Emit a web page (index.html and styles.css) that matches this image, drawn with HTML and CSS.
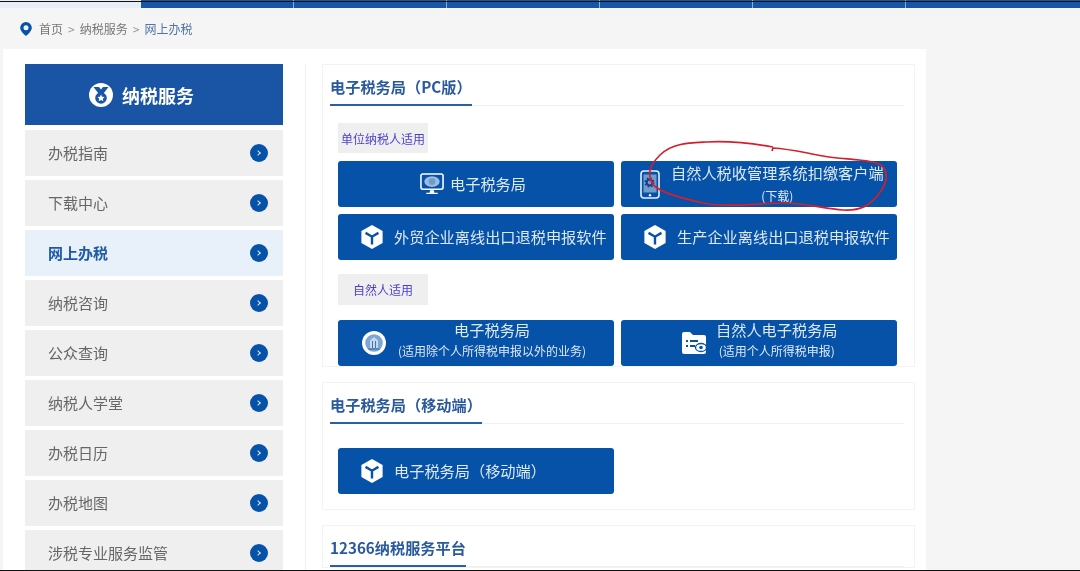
FILE: index.html
```html
<!DOCTYPE html>
<html lang="zh-CN">
<head>
    <meta charset="UTF-8">
    <title>网上办税</title>
    <link rel="stylesheet" href="styles.css">
</head>
<body>
    <div class="page">
      <div class="topnav">
        <div class="nav-home"></div>
        <div class="nav-item nav-first"></div>
        <div class="nav-item"></div>
        <div class="nav-item"></div>
        <div class="nav-item"></div>
        <div class="nav-item"></div>
        <div class="nav-rest"></div>
      </div>

      <div class="crumbs">
        <svg class="pin" viewBox="0 0 12 14"><path fill-rule="evenodd" d="M6 0a5.800 5.800 0 0 1 5.800 5.800C11.800 9 8 12.300 6 14 4 12.300.2 9 .2 5.800A5.800 5.800 0 0 1 6 0zm0 3.300a2.500 2.500 0 1 0 0 5 2.500 2.500 0 0 0 0-5z"/></svg>
        <span>首页</span><span class="sep">&gt;</span><span>纳税服务</span><span class="sep">&gt;</span><span class="current">网上办税</span>
      </div>

      <div class="panel">
        <div class="sidebar">
          <div class="side-head">
            <svg class="medal" viewBox="0 0 24 24">
              <circle cx="12" cy="12" r="12" fill="#fff"/>
              <path d="M4.500 4H10l2 2.500L14 4h5.500l-5 6.500h-5z" fill="#1a55a5"/>
              <circle cx="12" cy="15" r="5.800" fill="#1a55a5"/>
              <path d="m12 11.400 1.100 2.300 2.500.3-1.800 1.700.5 2.500-2.300-1.200-2.300 1.200.5-2.500L8.400 14l2.500-.3z" fill="#fff"/>
            </svg>
            <span>纳税服务</span>
          </div>
          <div class="side-item"><span>办税指南</span><i class="dot"></i></div>
          <div class="side-item"><span>下载中心</span><i class="dot"></i></div>
          <div class="side-item active"><span>网上办税</span><i class="dot"></i></div>
          <div class="side-item"><span>纳税咨询</span><i class="dot"></i></div>
          <div class="side-item"><span>公众查询</span><i class="dot"></i></div>
          <div class="side-item"><span>纳税人学堂</span><i class="dot"></i></div>
          <div class="side-item"><span>办税日历</span><i class="dot"></i></div>
          <div class="side-item"><span>办税地图</span><i class="dot"></i></div>
          <div class="side-item"><span>涉税专业服务监管</span><i class="dot"></i></div>
        </div>

        <div class="content">
          <div class="card">
            <div class="card-title"><h3>电子税务局（PC版）</h3></div>
            <div class="card-body">
              <div class="tag">单位纳税人适用</div>
              <div class="btn-grid">
                <a class="btn btn-monitor">
                  <svg class="icon" viewBox="0 0 25 23">
                    <rect x="1" y="1" width="23" height="16" rx="2" fill="#0552a8" stroke="#fff" stroke-width="1.600"/>
                    <ellipse cx="12.500" cy="9" rx="8" ry="5.500" fill="#9dbbdd"/>
                    <circle cx="12.500" cy="9" r="3.500" fill="#6f9ccb"/>
                    <path d="M10.500 18h4l.5 2.500h3.500V22H6.500v-1.500H10z" fill="#fff"/>
                  </svg>
                  <span>电子税务局</span>
                </a>
                <a class="btn btn-phone">
                  <svg class="icon-phone" viewBox="0 0 20 29">
                    <rect x="1" y="1" width="18" height="27" rx="3" fill="none" stroke="#e6eef7" stroke-width="1.600"/>
                    <rect x="3.500" y="4.500" width="13" height="18" fill="#6f9ccb"/>
                    <circle cx="9.500" cy="12.500" r="2.800" fill="none" stroke="#123e86" stroke-width="1.800"/>
                    <circle cx="9.500" cy="12.500" r="4.300" fill="none" stroke="#123e86" stroke-width="1.500" stroke-dasharray="1.700 1.700"/>
                    <circle cx="10" cy="25.200" r="1.200" fill="#fff"/>
                  </svg>
                  <div class="btn-lines">
                    <div>自然人税收管理系统扣缴客户端</div>
                    <small>(下载)</small>
                  </div>
                </a>
                <a class="btn btn-cube">
                  <svg class="icon" viewBox="0 0 24 26"><use href="#cube"/></svg>
                  <span>外贸企业离线出口退税申报软件</span>
                </a>
                <a class="btn btn-cube">
                  <svg class="icon" viewBox="0 0 24 26"><use href="#cube"/></svg>
                  <span>生产企业离线出口退税申报软件</span>
                </a>
              </div>
              <div class="tag tag-second">自然人适用</div>
              <div class="btn-grid">
                <a class="btn btn-round">
                  <svg class="icon" viewBox="0 0 24 24">
                    <circle cx="12" cy="12" r="12" fill="#fff"/>
                    <circle cx="12" cy="12" r="8.800" fill="#7fa6d2"/>
                    <path d="M8 17V9.500L12 6l4 3.500V17z" fill="#c5d8ec"/>
                    <path d="M10 10h1v7h-1zm3 0h1v7h-1z" fill="#3f77b6"/>
                    <path d="M6.500 17.500h11v1h-11z" fill="#2c66aa"/>
                  </svg>
                  <div class="btn-lines tight">
                    <div>电子税务局</div>
                    <small>(适用除个人所得税申报以外的业务)</small>
                  </div>
                </a>
                <a class="btn btn-folder">
                  <svg class="icon" viewBox="0 0 24 22">
                    <path d="M0 2a2 2 0 0 1 2-2h6l3 3h11a2 2 0 0 1 2 2v15a2 2 0 0 1-2 2H2a2 2 0 0 1-2-2z" fill="#fff"/>
                    <path d="M4 8h2v2H4zm4 0h8v2H8zm-4 5h2v2H4zm4 0h5v2H8z" fill="#0552a8"/>
                    <ellipse cx="19" cy="15.500" rx="5.500" ry="4" fill="#fff" stroke="#0552a8" stroke-width="1.300"/>
                    <circle cx="19" cy="15.500" r="1.800" fill="#0552a8"/>
                  </svg>
                  <div class="btn-lines tight">
                    <div>自然人电子税务局</div>
                    <small>(适用个人所得税申报)</small>
                  </div>
                </a>
              </div>
            </div>
          </div>

          <div class="card">
            <div class="card-title"><h3>电子税务局（移动端）</h3></div>
            <div class="card-body mobile-body">
              <div class="btn-grid">
                <a class="btn btn-cube">
                  <svg class="icon" viewBox="0 0 24 26"><use href="#cube"/></svg>
                  <span>电子税务局（移动端）</span>
                </a>
              </div>
            </div>
          </div>

          <div class="card">
            <div class="card-title"><h3>12366纳税服务平台</h3></div>
          </div>
        </div>
      </div>

      <!-- hand drawn mark on top of the screenshot -->
      <svg class="scribble" viewBox="0 0 1080 571">
        <path d="M773 147C750 143 725 141 707 142S672 143 660 155 648 175 652 183 680 198 703 203 760 203 783 203 825 209 843 210 870 205 878 195 889 175 883 167 845 160 823 156 790 149 773 148l-1 3"/>
      </svg>
    </div>

    <div class="line line-top"></div>
    <div class="line line-bottom"></div>

    <svg class="defs" width="0" height="0">
      <symbol id="cube" viewBox="0 0 24 26">
        <path d="M12 0 23.500 6.500v13L12 26 .5 19.500v-13z" fill="#fff"/>
        <path d="M5 8.500l7 4.200 7-4.200M12 12.700V21" fill="none" stroke="#0552a8" stroke-width="2.600"/>
      </symbol>
    </svg>
</body>
</html>
```

FILE: styles.css
```css
html, body {
  margin: 0;
  height: 571px;
  overflow: hidden;
}

body {
  position: relative;
  background-color: #f5f5f5;
  font-family: "Noto Sans CJK SC", "Liberation Sans", sans-serif;
  color: #666;
}

h3 {
  margin: 0;
}

.page {
  position: relative;
  height: 571px;
  filter: blur(0.55px);
}

.line {
  position: absolute;
  left: 0;
  right: 0;
  height: 1px;
  background-color: #111;
}

.line-top {
  top: 1px;
}

.line-bottom {
  bottom: 0;
}

.defs {
  position: absolute;
}

/* top nav */
.topnav {
  display: flex;
  height: 8px;
}

.nav-home {
  width: 141px;
  background-color: #e8eef7;
}

.nav-item {
  width: 152px;
  background-color: #1a55a5;
  border-right: 1px solid #8fb0cf;
}

.nav-rest {
  flex: 1;
  background-color: #1a55a5;
}

/* breadcrumb */
.crumbs {
  display: flex;
  align-items: center;
  height: 41px;
  padding-left: 20px;
  font-size: 12px;
  color: #777;
}

.pin {
  width: 12px;
  height: 14px;
  margin-right: 7px;
  fill: #0552a8;
}

.sep {
  margin: 0 5px;
  color: #999;
}

.current {
  color: #4f74a8;
}

/* main panel */
.panel {
  display: flex;
  width: 890px;
  height: 522px;
  margin-left: 3px;
  padding: 15px 11px 0 22px;
  background-color: #fff;
}

.sidebar {
  display: flex;
  flex-direction: column;
  gap: 4px;
  width: 258px;
  flex-shrink: 0;
}

.side-head {
  display: flex;
  align-items: center;
  gap: 9px;
  height: 61px;
  margin-bottom: 1px;
  padding-left: 64px;
  background-color: #1a55a5;
  color: #fff;
  font-size: 18px;
  font-weight: 700;
}

.medal {
  width: 24px;
  height: 24px;
}

.side-item {
  display: flex;
  align-items: center;
  justify-content: space-between;
  flex-shrink: 0;
  height: 46px;
  padding: 0 15px 0 23px;
  background-color: #efefef;
  font-size: 15px;
}

.side-item span {
  margin-top: -2px;
}

.side-item.active {
  background-color: #e8f0fa;
  color: #1f5aa8;
  font-weight: 700;
}

.dot {
  position: relative;
  width: 18px;
  height: 18px;
  border-radius: 50%;
  background-color: #0552a8;
}

.dot::after {
  content: "";
  position: absolute;
  top: 7px;
  left: 6px;
  width: 3px;
  height: 3px;
  border-top: 1.500px solid #dce8f5;
  border-right: 1.500px solid #dce8f5;
  transform: rotate(45deg);
}

/* right side */
.content {
  display: flex;
  flex-direction: column;
  gap: 15px;
  width: 593px;
  margin-left: 22px;
  padding-left: 16px;
  border-left: 1px solid #f0f0f0;
  flex-shrink: 0;
}

.card {
  border: 1px solid #f3f3f3;
  flex-shrink: 0;
}

.card-title {
  display: flex;
  height: 40px;
  margin: 0 10px 0 7px;
  border-bottom: 1px solid #f1f1f1;
}

.card-title h3 {
  box-sizing: border-box;
  height: 41px;
  border-bottom: 2px solid #2a5ea8;
  color: #2a5a9e;
  font-size: 15.200px;
  line-height: 42px;
  font-weight: 700;
}

.card-body {
  padding: 17px 0 0 15px;
}

.mobile-body {
  padding: 24px 0 15px 15px;
}

.tag {
  width: 90px;
  height: 30px;
  margin-bottom: 8px;
  background-color: #efefef;
  color: #4a3fd0;
  font-size: 12px;
  line-height: 31px;
  text-align: center;
}

.tag-second {
  height: 31px;
  margin: 14px 0 15px;
}

.btn-grid {
  display: grid;
  grid-template-columns: 276px 276px;
  gap: 7px;
}

.btn {
  display: flex;
  align-items: center;
  height: 46px;
  background-color: #0552a8;
  border-radius: 3px;
  color: #dfe9f4;
  font-size: 15.200px;
  white-space: nowrap;
}

.btn > span {
  margin-top: -2px;
}

.icon {
  width: 24px;
  height: 24px;
  flex-shrink: 0;
}

.icon-phone {
  width: 20px;
  height: 29px;
  flex-shrink: 0;
}

.btn-monitor {
  gap: 6px;
  padding-left: 82px;
}

.btn-phone {
  gap: 11px;
  padding-left: 19px;
}

.btn-cube {
  gap: 10px;
  padding-left: 22px;
}

.btn-round {
  gap: 12px;
  padding-left: 24px;
}

.btn-folder {
  gap: 10px;
  padding-left: 61px;
}

.btn-lines {
  margin-top: -1px;
  line-height: 24px;
  text-align: center;
}

.btn-lines small {
  display: block;
  font-size: 12px;
}

.btn-lines.tight {
  margin-top: -6px;
  line-height: 21px;
}

.scribble {
  position: absolute;
  top: 0;
  left: 0;
  width: 1080px;
  height: 571px;
  fill: none;
  stroke: #d3202c;
  stroke-width: 1.700;
}
```
